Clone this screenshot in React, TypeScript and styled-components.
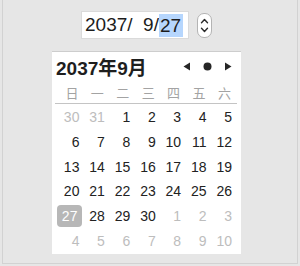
import { FunctionComponent } from 'react'
import styled, { createGlobalStyle } from 'styled-components'

const GlobalStyle = createGlobalStyle`
  html, body {
    margin: 0;
    padding: 0;
    background: #e6e6e6;
  }
  body {
    font-family: 'Liberation Sans', 'Noto Sans CJK SC', sans-serif;
  }
`

const WEEKDAYS = ['日', '一', '二', '三', '四', '五', '六']

type Day = { n: number; muted: boolean; selected?: boolean }

const buildDays = (): Day[] => {
  const days: Day[] = [
    { n: 30, muted: true },
    { n: 31, muted: true },
  ]
  for (let i = 1; i <= 30; i++) days.push({ n: i, muted: false, selected: i === 27 })
  for (let i = 1; i <= 10; i++) days.push({ n: i, muted: true })
  return days
}

const App: FunctionComponent = () => {
  const days = buildDays()

  return (
    <>
      <GlobalStyle />
      <Frame>
        <Inner>
          <FieldRow>
            <DateField>
              2037/  9/<Selection>27</Selection>
            </DateField>
            <Stepper>
              <svg width='9' height='6' viewBox='0 0 9 6'>
                <path d='M1.5 4.8 L4.5 1.6 L7.5 4.8' fill='none' stroke='#2b2b2b' strokeWidth='1.4' strokeLinecap='round' strokeLinejoin='round' />
              </svg>
              <svg width='9' height='6' viewBox='0 0 9 6'>
                <path d='M1.5 1.2 L4.5 4.4 L7.5 1.2' fill='none' stroke='#2b2b2b' strokeWidth='1.4' strokeLinecap='round' strokeLinejoin='round' />
              </svg>
            </Stepper>
          </FieldRow>
          <PanelRow>
            <Panel>
              <Header>
                <Title>2037年9月</Title>
                <Nav>
                  <svg width='8' height='9' viewBox='0 0 8 9'>
                    <path d='M7 0.5 L7 8.5 L0.5 4.5 Z' fill='#262626' />
                  </svg>
                  <svg width='9' height='9' viewBox='0 0 9 9'>
                    <circle cx='4.5' cy='4.5' r='4' fill='#262626' />
                  </svg>
                  <svg width='8' height='9' viewBox='0 0 8 9'>
                    <path d='M1 0.5 L1 8.5 L7.5 4.5 Z' fill='#262626' />
                  </svg>
                </Nav>
              </Header>
              <WeekRow>
                {WEEKDAYS.map(w => (
                  <WeekLabel key={w}>{w}</WeekLabel>
                ))}
              </WeekRow>
              <DayGrid>
                {days.map((d, i) => (
                  <DayCell key={i}>
                    <DayNum $muted={d.muted} $selected={!!d.selected}>
                      {d.n}
                    </DayNum>
                  </DayCell>
                ))}
              </DayGrid>
            </Panel>
          </PanelRow>
        </Inner>
      </Frame>
    </>
  )
}

export default App

const Frame = styled.div`
  width: 300px;
  height: 266px;
  padding: 0 2px 2px;
  box-sizing: border-box;
  background: #e6e6e6;
`

const Inner = styled.div`
  height: 100%;
  box-sizing: border-box;
  border: 1px solid #d2d2d2;
  border-top: none;
  display: flex;
  flex-direction: column;
`

const FieldRow = styled.div`
  display: flex;
  justify-content: center;
  align-items: center;
  gap: 8px;
  margin-top: 11px;
  padding-right: 7px;
`

const DateField = styled.div`
  width: 108px;
  height: 28px;
  box-sizing: border-box;
  background: #fff;
  border: 1px solid #dadada;
  padding: 0 0 0 3px;
  display: flex;
  align-items: center;
  font-size: 19px;
  color: #1c1c1c;
  white-space: pre;
`

const Selection = styled.span`
  background: #b6d6fd;
  padding: 2px 2px 2px 1px;
  line-height: 19px;
`

const Stepper = styled.div`
  width: 15px;
  height: 25px;
  box-sizing: border-box;
  background: #fff;
  border: 1px solid #b4b4b4;
  border-radius: 7px;
  display: flex;
  flex-direction: column;
  align-items: center;
  justify-content: center;
  gap: 3px;
`

const PanelRow = styled.div`
  display: flex;
  justify-content: center;
  margin-top: 12px;
  padding-right: 7px;
`

const Panel = styled.div`
  width: 189px;
  height: 203px;
  box-sizing: border-box;
  background: #fff;
  border-top: 1px solid #cdcdcd;
  padding: 0 4px 0 3px;
  display: flex;
  flex-direction: column;
`

const Header = styled.div`
  height: 29px;
  display: flex;
  align-items: center;
  justify-content: space-between;
  padding: 0 5px 0 1px;
`

const Title = styled.div`
  font-size: 19px;
  font-weight: bold;
  color: #1e1e1e;
`

const Nav = styled.div`
  display: flex;
  align-items: center;
  gap: 12px;
`

const WeekRow = styled.div`
  width: 182px;
  height: 22px;
  border-bottom: 1px solid #c4c4c4;
  display: grid;
  grid-template-columns: repeat(7, 25.43px);
  align-items: center;
`

const WeekLabel = styled.div`
  text-align: right;
  padding-right: 2px;
  font-size: 13px;
  color: #a3a3a3;
`

const DayGrid = styled.div`
  width: 178px;
  margin-top: 1px;
  display: grid;
  grid-template-columns: repeat(7, 1fr);
  grid-auto-rows: 24.7px;
`

const DayCell = styled.div`
  display: flex;
  align-items: center;
  justify-content: flex-end;
  padding-right: 1px;
`

const DayNum = styled.span<{ $muted: boolean; $selected: boolean }>`
  font-size: 14px;
  line-height: 22px;
  height: 22px;
  padding: 0 ${p => (p.$selected ? '5px' : '0')};
  margin-right: ${p => (p.$selected ? '-3px' : '0')};
  border-radius: 4px;
  background: ${p => (p.$selected ? '#b7b7b7' : 'transparent')};
  color: ${p => (p.$selected ? '#fff' : p.$muted ? '#bdbdbd' : '#222')};
`
